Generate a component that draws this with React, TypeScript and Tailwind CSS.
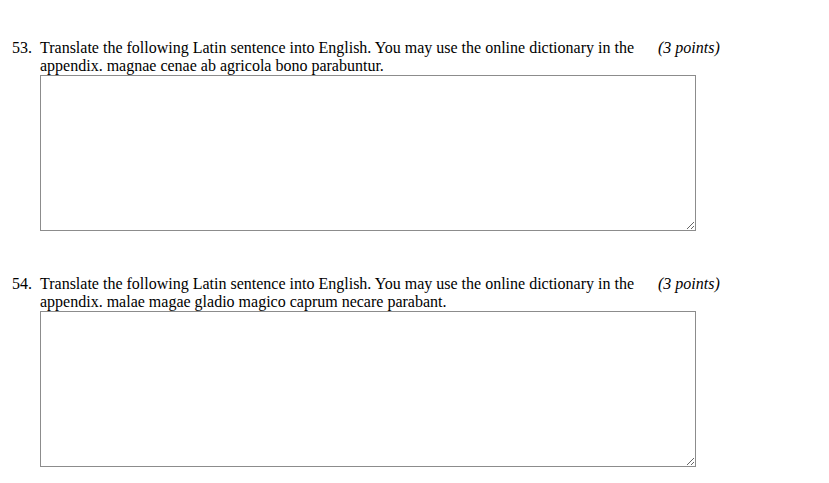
const questions = [
  {
    n: "53.",
    text: "Translate the following Latin sentence into English. You may use the online dictionary in the appendix. magnae cenae ab agricola bono parabuntur.",
  },
  {
    n: "54.",
    text: "Translate the following Latin sentence into English. You may use the online dictionary in the appendix. malae magae gladio magico caprum necare parabant.",
  },
];

export default function App() {
  return (
    <div className="min-h-screen w-full bg-white pt-[39px] pl-[12px] text-[16px] leading-[18px] text-black font-['Liberation_Serif',serif]">
      {questions.map((q) => (
        <div key={q.n} className="mb-[44px]">
          <div className="flex">
            <span className="w-[28px] shrink-0">{q.n}</span>
            <div className="w-[612px] shrink-0">{q.text}</div>
            <span className="ml-[6px] italic">(3 points)</span>
          </div>
          <div className="pl-[28px]">
            <textarea className="block w-[656px] h-[156px] border border-[#8c8c8c] bg-white" />
          </div>
        </div>
      ))}
    </div>
  );
}
